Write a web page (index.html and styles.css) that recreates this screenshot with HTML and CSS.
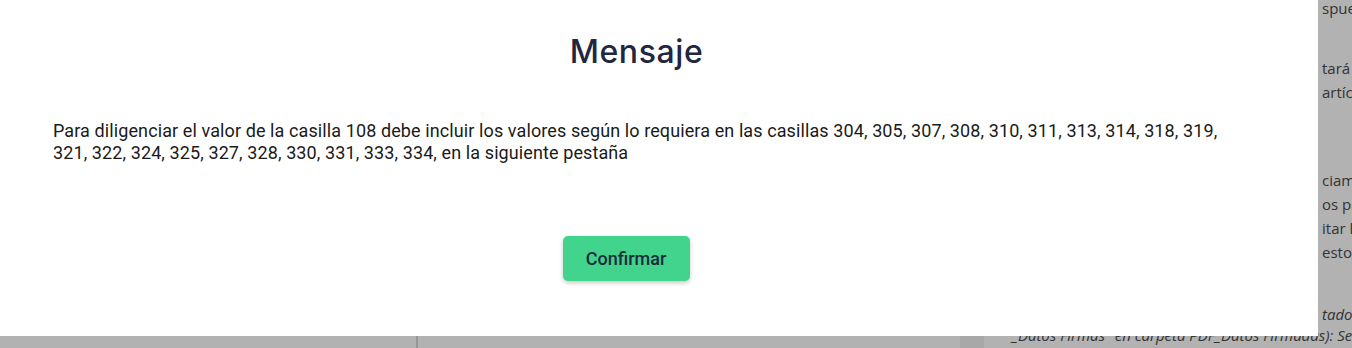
FILE: index.html
```html
<!DOCTYPE html>
<html lang="es">
<head>
<meta charset="utf-8">
<title>Mensaje</title>
<link rel="stylesheet" href="styles.css">
</head>
<body>
<div class="page">
  <div class="side-a"></div>
  <div class="side-b"></div>
  <div class="side-c"></div>
  <div class="side-d">
    <div class="bg-line cut l1">spuesto en</div>
    <div class="bg-line cut l2">tará gravado</div>
    <div class="bg-line cut">artículo</div>
    <div class="bg-line cut l3">ciamiento</div>
    <div class="bg-line cut">os por</div>
    <div class="bg-line cut">itar la</div>
    <div class="bg-line cut">estos</div>
    <div class="bg-line cut ital l4">tado</div>
    <div class="bg-line ital l5">_Datos Firmas" en carpeta PDF_Datos Firmadas): Se</div>
  </div>
</div>
<div class="overlay"></div>
<div class="modal" role="dialog">
  <h2 class="modal-title">Mensaje</h2>
  <p class="modal-text">Para diligenciar el valor de la casilla 108 debe incluir los valores según lo requiera en las casillas 304, 305, 307, 308, 310, 311, 313, 314, 318, 319, 321, 322, 324, 325, 327, 328, 330, 331, 333, 334, en la siguiente pestaña</p>
  <div class="modal-actions">
    <button class="btn-confirm" type="button">Confirmar</button>
  </div>
</div>
</body>
</html>
```
FILE: styles.css
```css
html, body {
  margin: 0;
  padding: 0;
}
body {
  width: 1352px;
  height: 348px;
  overflow: hidden;
  position: relative;
  background: #ffffff;
}

/* background page */
.page {
  display: flex;
  height: 348px;
}
.side-a {
  width: 416px;
  border-right: 2px solid #d8d8d8;
}
.side-b {
  width: 542px;
}
.side-c {
  width: 24px;
  background: #f1f1f1;
}
.side-d {
  flex: 1;
  padding-left: 28px;
  font-family: "Open Sans", "DejaVu Sans", sans-serif;
  font-size: 15px;
  line-height: 24px;
  color: #4a4a4a;
  overflow: hidden;
}
.bg-line {
  white-space: nowrap;
}
.cut {
  padding-left: 310px;
}
.l1 { margin-top: -4px; }
.l2 { margin-top: 36px; }
.l3 { margin-top: 64px; }
.l4 { margin-top: 38px; }
.l5 { margin-top: -3px; }
.ital { font-style: italic; }

.overlay {
  position: fixed;
  inset: 0;
  background: rgba(0, 0, 0, 0.3);
}

/* modal */
.modal {
  position: absolute;
  top: 0;
  left: -56px;
  width: 1374px;
  height: 336px;
  box-sizing: border-box;
  background: #ffffff;
  padding: 32px 75px 0 109px;
}
.modal-title {
  margin: 0 -75px 0 -109px;
  padding-left: 11px;
  text-align: center;
  font-family: Inter, "Open Sans", sans-serif;
  font-weight: 500;
  font-size: 32px;
  line-height: 40px;
  letter-spacing: 0.6px;
  color: #22263f;
}
.modal-text {
  margin: 48px 0 0;
  font-family: Roboto, "Liberation Sans", sans-serif;
  font-size: 18px;
  line-height: 22px;
  letter-spacing: 0.1px;
  color: #1a1a1a;
}
.modal-actions {
  display: flex;
  justify-content: center;
  margin: 72px -75px 0 -109px;
  padding-right: 10px;
}
.btn-confirm {
  width: 127px;
  height: 45px;
  border: none;
  border-radius: 5px;
  background: #42d38d;
  box-shadow: 0 2px 4px rgba(0, 0, 0, 0.22);
  font-family: Roboto, "Liberation Sans", sans-serif;
  font-weight: 500;
  font-size: 18px;
  color: #1b2b3a;
  cursor: pointer;
  padding: 0;
}
```
